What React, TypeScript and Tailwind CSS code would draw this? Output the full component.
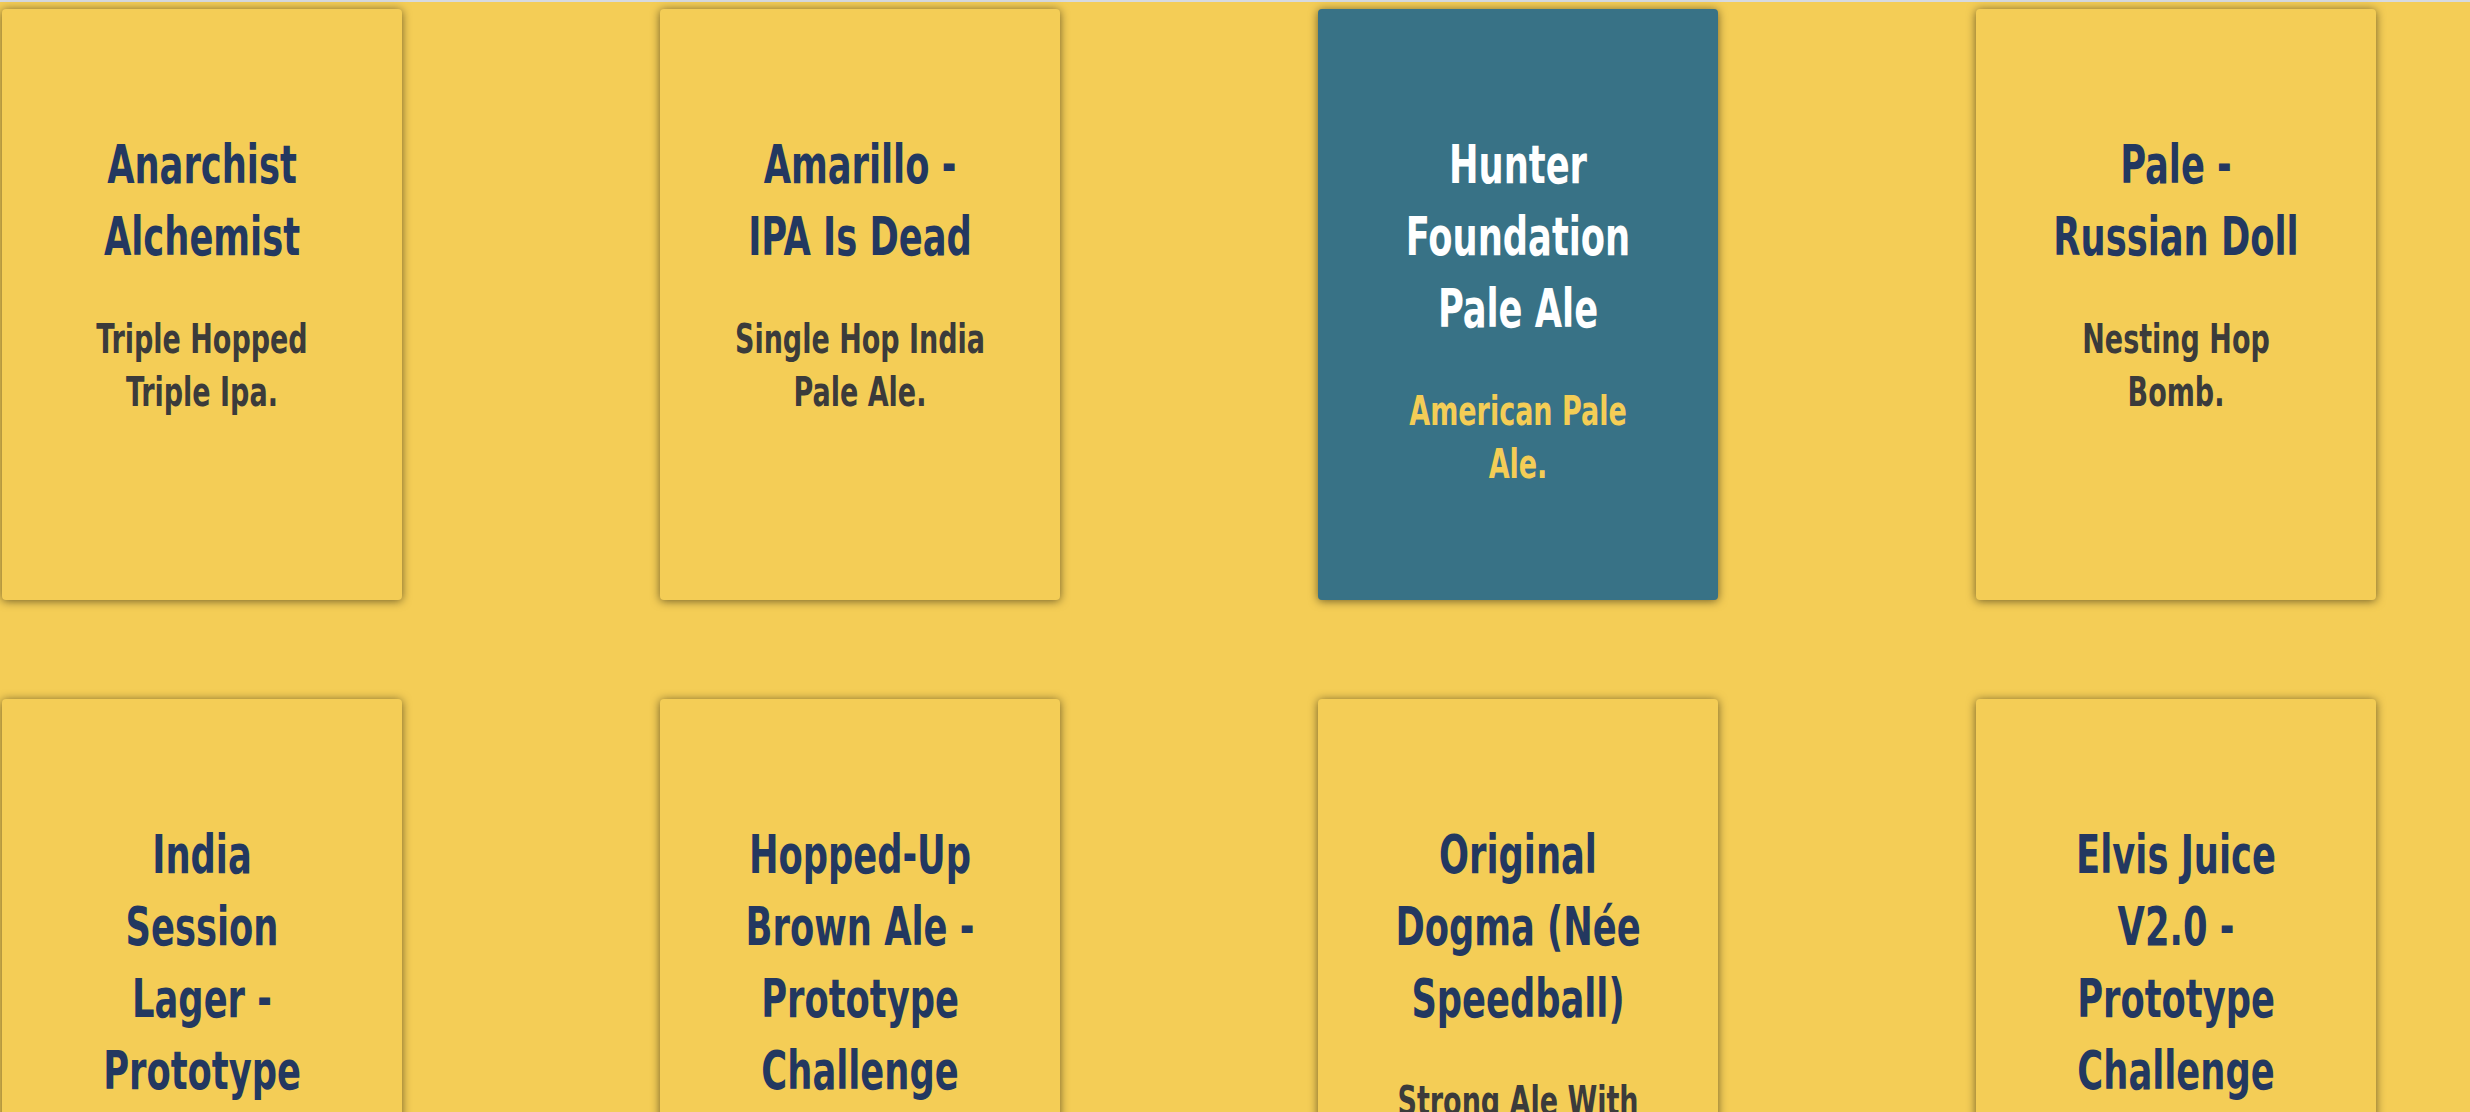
const beers = [
  { name: ['Anarchist', 'Alchemist'], tagline: ['Triple Hopped', 'Triple Ipa.'] },
  { name: ['Amarillo -', 'IPA Is Dead'], tagline: ['Single Hop India', 'Pale Ale.'] },
  { name: ['Hunter', 'Foundation', 'Pale Ale'], tagline: ['American Pale', 'Ale.'], active: true },
  { name: ['Pale -', 'Russian Doll'], tagline: ['Nesting Hop', 'Bomb.'] },
  { name: ['India', 'Session', 'Lager -', 'Prototype', 'Challenge'], tagline: ['Refreshing Hop', 'Fix.'] },
  { name: ['Hopped-Up', 'Brown Ale -', 'Prototype', 'Challenge'], tagline: ['Dry-Hopped', 'Brown Ale.'] },
  { name: ['Original', 'Dogma (Née', 'Speedball)'], tagline: ['Strong Ale With', 'Honey.'] },
  { name: ['Elvis Juice', 'V2.0 -', 'Prototype', 'Challenge'], tagline: ['Citrus Infused', 'IPA.'] },
]

// the condensed look comes from squeezing DejaVu Sans Condensed horizontally
function BeerCard({ name, tagline, active }: { name: string[]; tagline: string[]; active?: boolean }) {
  return (
    <div
      className={
        active
          ? 'h-[591px] rounded bg-[#387286] px-6 pt-[120px] text-center shadow-[0_1px_10px_rgba(0,0,0,0.55)]'
          : 'h-[591px] rounded bg-[#f4cd56] px-6 pt-[120px] text-center shadow-[0_1px_10px_rgba(0,0,0,0.55)]'
      }
    >
      <h2 className={active ? 'text-[53px] leading-[72px] font-bold text-white' : 'text-[53px] leading-[72px] font-bold text-[#233860]'}>
        {name.map((line) => (
          <span key={line} className="block scale-x-[0.74] whitespace-nowrap">
            {line}
          </span>
        ))}
      </h2>
      <p className={active ? 'mt-10 text-[40px] leading-[53px] font-bold text-[#f4cd56]' : 'mt-10 text-[40px] leading-[53px] font-bold text-[#3b3b3b]'}>
        {tagline.map((line) => (
          <span key={line} className="block scale-x-[0.75] whitespace-nowrap">
            {line}
          </span>
        ))}
      </p>
    </div>
  )
}

export default function App() {
  return (
    <div className="h-[1112px] overflow-hidden bg-[#f4cd56] font-['Liberation_Sans_Narrow','DejaVu_Sans_Condensed','Liberation_Sans',sans-serif]">
      <div className="h-[2px] bg-[#d6dae0]" />
      <div className="grid grid-cols-[repeat(4,400px)] gap-x-[258px] gap-y-[99px] pt-[7px] pl-[2px]">
        {beers.map((beer) => (
          <BeerCard key={beer.name.join(' ')} {...beer} />
        ))}
      </div>
    </div>
  )
}
